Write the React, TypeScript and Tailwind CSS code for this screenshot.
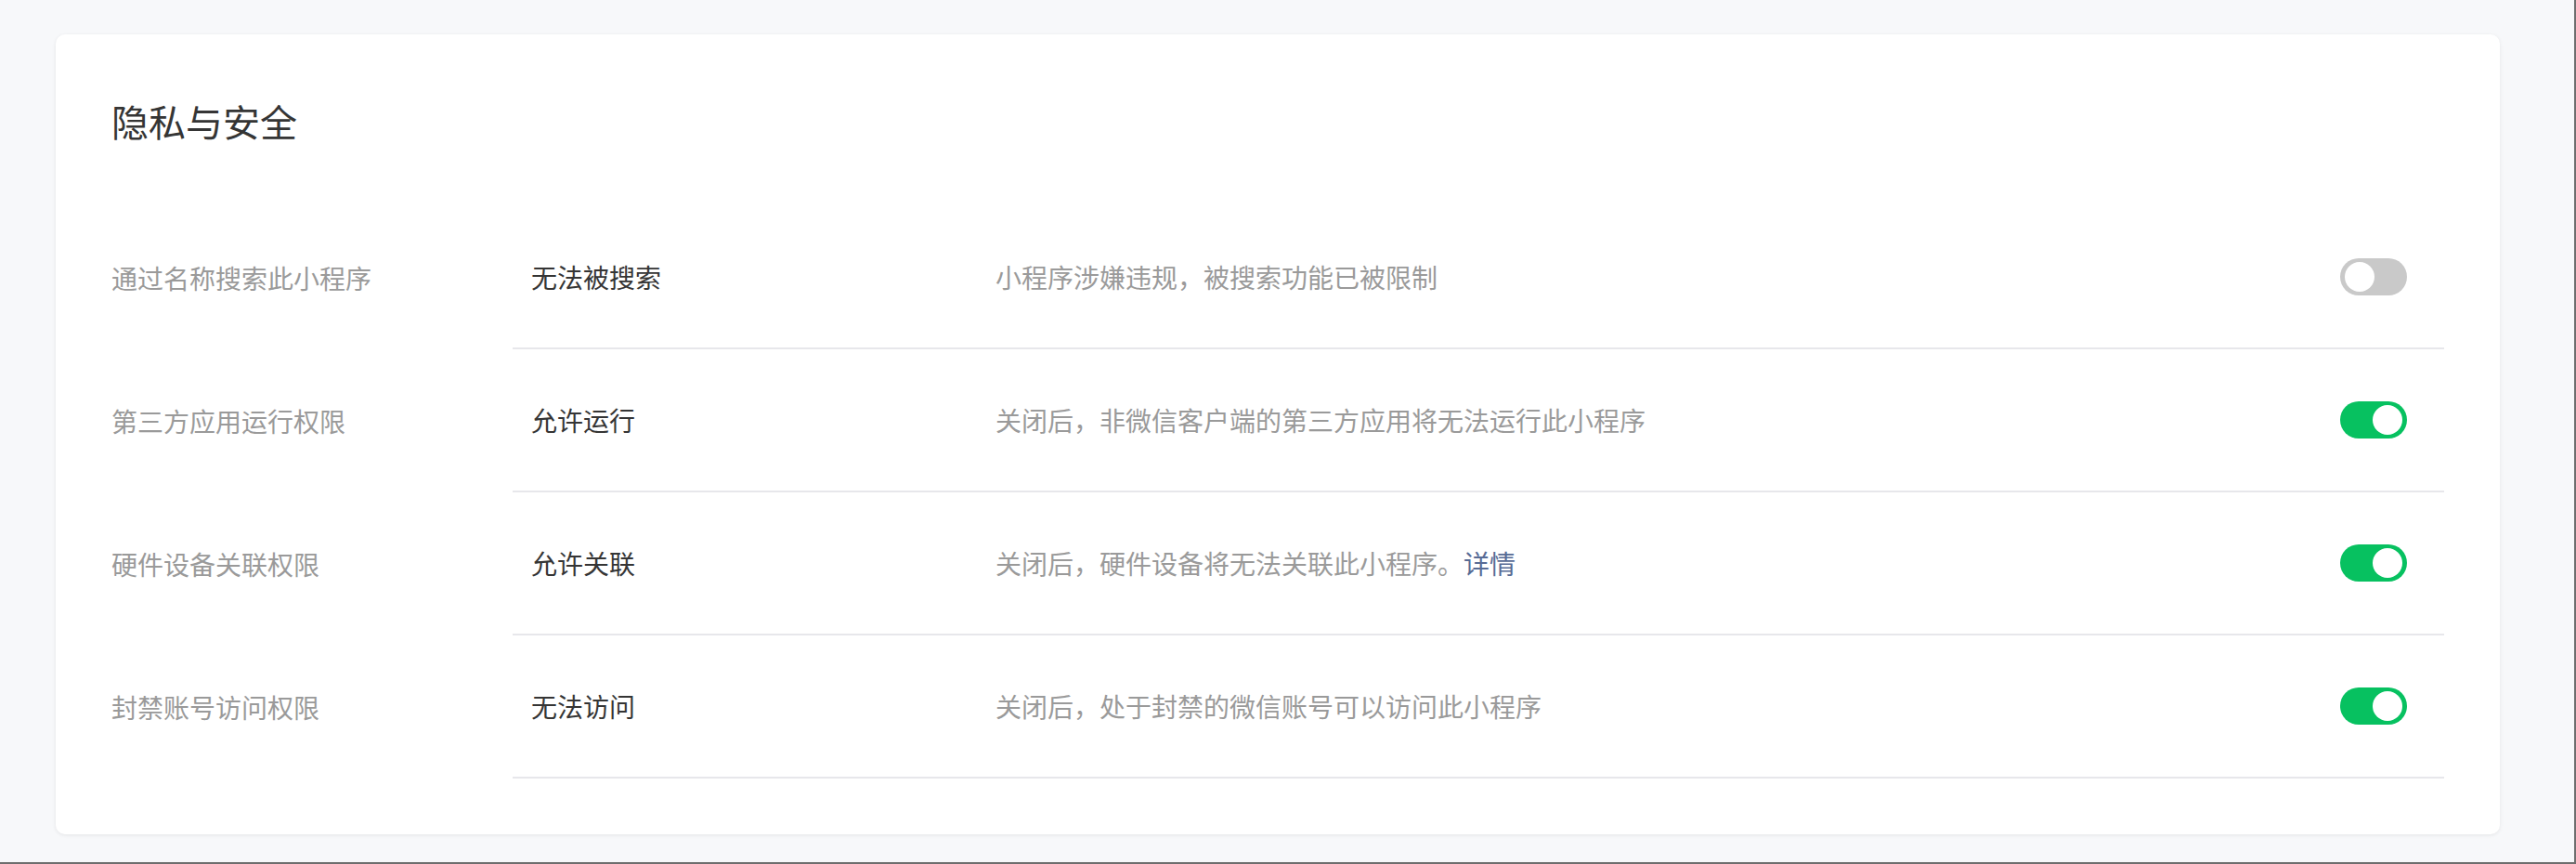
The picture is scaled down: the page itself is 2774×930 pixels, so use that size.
const rows = [
  {
    label: "通过名称搜索此小程序",
    value: "无法被搜索",
    desc: "小程序涉嫌违规，被搜索功能已被限制",
    on: false,
  },
  {
    label: "第三方应用运行权限",
    value: "允许运行",
    desc: "关闭后，非微信客户端的第三方应用将无法运行此小程序",
    on: true,
  },
  {
    label: "硬件设备关联权限",
    value: "允许关联",
    desc: "关闭后，硬件设备将无法关联此小程序。",
    link: "详情",
    on: true,
  },
  {
    label: "封禁账号访问权限",
    value: "无法访问",
    desc: "关闭后，处于封禁的微信账号可以访问此小程序",
    on: true,
  },
];

const Toggle = ({ on }: { on: boolean }) => {
  return (
    <div
      className={
        on
          ? "flex h-[40px] w-[72px] items-center justify-end rounded-full bg-[#07c160] px-[5px]"
          : "flex h-[40px] w-[72px] items-center justify-start rounded-full bg-[#c9c9c9] px-[5px]"
      }
    >
      <div className="h-[32px] w-[32px] rounded-full bg-white"></div>
    </div>
  );
};

const App = () => {
  return (
    <div
      className="h-[930px] w-full border-r-2 border-b-2 border-[#6e6e6e] bg-[#f7f8fa] pt-[37px] pl-[60px]"
      style={{ fontFamily: '"Noto Sans CJK SC", "Noto Sans", sans-serif' }}
    >
      {/* Card */}
      <div className="h-[861px] w-[2632px] rounded-[10px] bg-white px-[60px] pt-[65px] shadow-[0_1px_4px_rgba(0,0,0,0.08)]">
        <h2 className="text-[40px] leading-[56px] text-[#353535]">隐私与安全</h2>

        <div className="mt-[64px]">
          {rows.map((row) => (
            <div key={row.label} className="flex h-[154px]">
              <div className="flex w-[432px] shrink-0 items-center text-[28px] text-[#9a9a9a]">
                {row.label}
              </div>
              <div className="flex flex-1 items-center border-b-2 border-[#e7e7eb] pr-[40px] pl-[20px] text-[28px]">
                <div className="w-[500px] shrink-0 text-[#353535]">{row.value}</div>
                <div className="flex-1 text-[#9a9a9a]">
                  {row.desc}
                  {row.link && <span className="text-[#576b95]">{row.link}</span>}
                </div>
                <Toggle on={row.on} />
              </div>
            </div>
          ))}
        </div>
      </div>
    </div>
  );
};

export default App;
